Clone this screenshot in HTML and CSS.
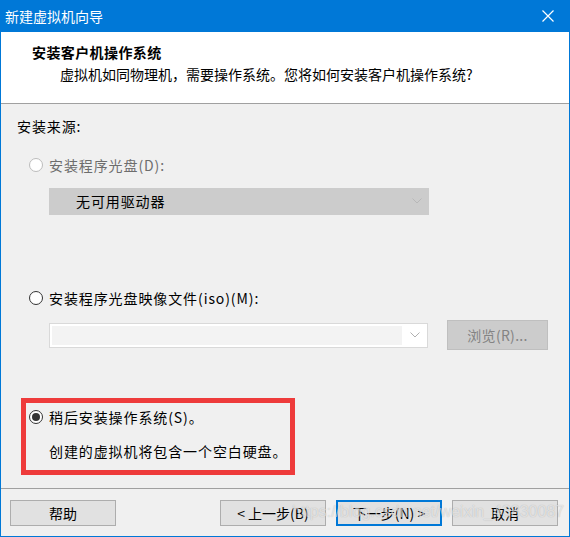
FILE: index.html
```html
<!DOCTYPE html>
<html lang="zh-CN">
<head>
<meta charset="utf-8">
<title>新建虚拟机向导</title>
<link rel="stylesheet" href="styles.css">
</head>
<body>
<div class="window">
  <div class="titlebar">
    <span class="title">新建虚拟机向导</span>
    <svg class="close" width="12" height="12" viewBox="0 0 12 12"><path d="M0.5 0.5 L11.5 11.5 M11.5 0.5 L0.5 11.5" stroke="#fff" stroke-width="1.2" fill="none"/></svg>
  </div>
  <div class="header">
    <div class="h-title">安装客户机操作系统</div>
    <div class="h-sub">虚拟机如同物理机，需要操作系统。您将如何安装客户机操作系统?</div>
  </div>
  <div class="body">
    <div class="src-label">安装来源:</div>
    <div class="radio-row disabled row1">
      <span class="radio"></span><span class="rlabel">安装程序光盘(D):</span>
    </div>
    <div class="dropdown">
      <span class="dd-text">无可用驱动器</span>
      <svg class="chev" width="10" height="6" viewBox="0 0 10 6"><path d="M0.5 0.5 L5 5 L9.5 0.5" stroke="#b8b8b8" fill="none"/></svg>
    </div>
    <div class="radio-row row2">
      <span class="radio"></span><span class="rlabel">安装程序光盘映像文件(iso)(M):</span>
    </div>
    <div class="iso-row">
      <div class="combo">
        <div class="combo-field"></div>
        <svg class="chev" width="10" height="6" viewBox="0 0 10 6"><path d="M0.5 0.5 L5 5 L9.5 0.5" stroke="#b0b0b0" fill="none"/></svg>
      </div>
      <div class="browse">浏览(R)...</div>
    </div>
    <div class="later-box">
      <div class="radio-row row3">
        <span class="radio checked"></span><span class="rlabel">稍后安装操作系统(S)。</span>
      </div>
      <div class="later-desc">创建的虚拟机将包含一个空白硬盘。</div>
    </div>
  </div>
  <div class="footer">
    <div class="btn">帮助</div>
    <div class="btn-group">
      <div class="btn">&lt; 上一步(B)</div>
      <div class="btn primary">下一步(N) &gt;</div>
      <div class="btn">取消</div>
    </div>
  </div>
  <div class="watermark">https://blog.csdn.net/weixin_43830087</div>
</div>
</body>
</html>
```

FILE: styles.css
```css
* { box-sizing: border-box; }
html, body { margin: 0; padding: 0; }
body {
  width: 570px;
  height: 537px;
  overflow: hidden;
  font-family: "Noto Sans CJK SC", "Microsoft YaHei", sans-serif;
  font-size: 14px;
  color: #000;
  background: #f0f0f0;
}
.window {
  position: relative;
  width: 570px;
  height: 537px;
  border: 1px solid #0078d7;
  border-top: none;
  display: flex;
  flex-direction: column;
  background: #f0f0f0;
}
.titlebar {
  height: 32px;
  background: #0078d7;
  display: flex;
  align-items: center;
  justify-content: space-between;
  padding: 0 15px 0 4px;
  flex: none;
}
.title {
  color: #fff;
  font-size: 14px;
  line-height: 20px;
}
.close { display: block; }
.header {
  height: 72px;
  background: #fff;
  border-bottom: 1px solid #a0a0a0;
  padding: 10px 0 0 31px;
  flex: none;
}
.h-title {
  font-weight: bold;
  line-height: 20px;
  letter-spacing: 0.4px;
}
.h-sub {
  line-height: 20px;
  margin-top: 2px;
  padding-left: 28px;
}
.body {
  height: 384px;
  flex: none;
  padding: 12px 0 0 16px;
  display: flex;
  flex-direction: column;
  align-items: flex-start;
  letter-spacing: 0.9px;
}
.src-label { line-height: 20px; }
.radio-row {
  display: flex;
  align-items: center;
  height: 20px;
  line-height: 20px;
}
.row1 { margin: 19px 0 0 12px; }
.row2 { margin: 73px 0 0 12px; }
.radio {
  width: 14px;
  height: 14px;
  border-radius: 50%;
  border: 1px solid #333;
  background: #fff;
  margin-right: 6px;
  display: flex;
  align-items: center;
  justify-content: center;
  flex: none;
}
.disabled .radio { border-color: #bcbcbc; }
.disabled .rlabel { color: #6d6d6d; }
.radio.checked::after {
  content: "";
  width: 8px;
  height: 8px;
  border-radius: 50%;
  background: #333;
}
.dropdown {
  margin: 13px 0 0 32px;
  width: 380px;
  height: 27px;
  background: #cccccc;
  display: flex;
  align-items: center;
  justify-content: space-between;
  padding: 0 7px 2px 27px;
}
.dd-text { line-height: 20px; }
.chev { display: block; }
.iso-row {
  margin: 12px 0 0 32px;
  display: flex;
  align-items: center;
  height: 30px;
}
.combo {
  width: 379px;
  height: 25px;
  border: 1px solid #d9d9d9;
  background: #fff;
  display: flex;
  align-items: center;
  padding: 2px 7px 2px 2px;
}
.combo-field {
  flex: 1;
  height: 100%;
  background: #f3f3f3;
  margin-right: 8px;
}
.browse {
  margin-left: 19px;
  width: 101px;
  height: 30px;
  background: #cccccc;
  border: 1px solid #bfbfbf;
  color: #838383;
  display: flex;
  align-items: center;
  justify-content: center;
  letter-spacing: 0.3px;
}
.later-box {
  margin: 48px 0 0 4px;
  width: 274px;
  height: 77px;
  border: 5px solid #ee3b3b;
  padding: 4px 0 0 3px;
}
.row3 { margin: 0; }
.row3 .radio { margin-right: 6px; }
.later-desc {
  margin: 14px 0 0 20px;
  line-height: 20px;
}
.footer {
  flex: 1;
  border-top: 1px solid #a0a0a0;
  display: flex;
  align-items: flex-start;
  padding: 11px 11px 0 9px;
}
.btn-group {
  margin-left: auto;
  display: flex;
  gap: 10px;
}
.btn {
  width: 106px;
  height: 26px;
  background: #e1e1e1;
  border: 1px solid #adadad;
  display: flex;
  align-items: center;
  justify-content: center;
  line-height: 20px;
}
.btn.primary {
  border: 2px solid #0078d7;
}
.watermark {
  position: absolute;
  left: 291px;
  top: 503px;
  font-family: "Liberation Sans", Arial, sans-serif;
  font-size: 16px;
  color: rgba(255, 255, 255, 0.6);
  text-shadow: 0 0 1px rgba(0, 0, 0, 0.25);
  white-space: nowrap;
  pointer-events: none;
}
```
